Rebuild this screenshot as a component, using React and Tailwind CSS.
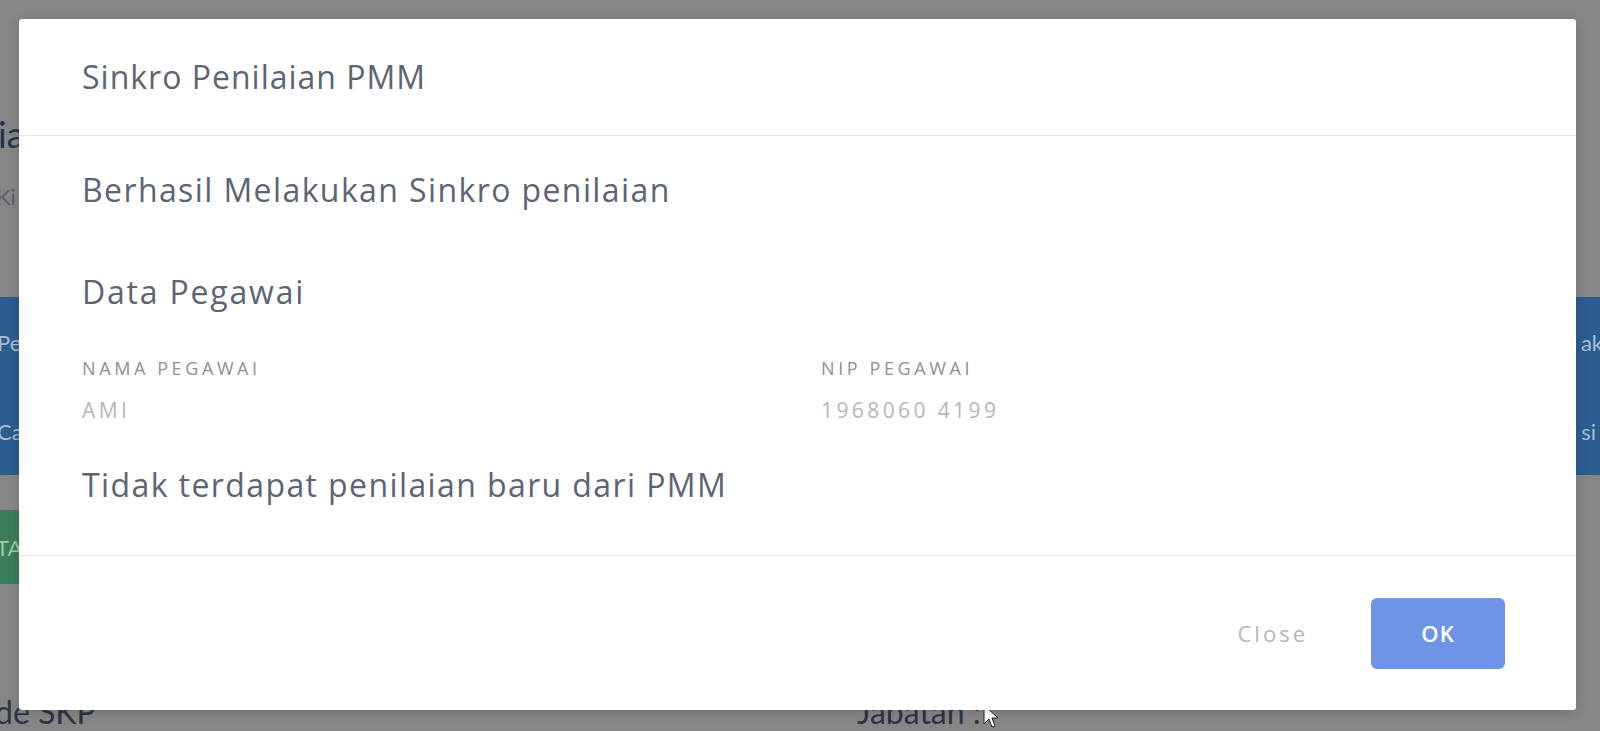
export default function App() {
  return (
    <div className="relative h-[731px] w-[1600px] overflow-hidden bg-[#868686]" style={{ fontFamily: 'Lato, "Open Sans", sans-serif' }}>
      {/* page under the overlay */}
      <div className="flex flex-col">
        <div className="h-[114px]" />
        <p className="-ml-[2px] text-[36px] leading-[40px] text-[#23344d]">ia</p>
        <p className="mt-[30px] -ml-[4px] text-[22px] leading-[26px] text-[#5b5f66]">Ki</p>
        <div className="mt-[87px] flex h-[178px] justify-between bg-[#2b5d91] text-[22px] text-[#a9bdd2]">
          <div className="flex flex-col gap-[56px] pt-[29px]">
            <span className="-ml-[3px]">Pe</span>
            <span className="-ml-[3px]">Ca</span>
          </div>
          <div className="flex flex-col items-end gap-[56px] pt-[29px]">
            <span className="-mr-[3px]">ak</span>
            <span className="mr-[4px]">si</span>
          </div>
        </div>
        <div className="mt-[35px] flex h-[74px] w-[120px] items-center bg-[#3a7e57] text-[22px] text-[#9fc3ab]">
          <span className="-ml-[4px]">TA</span>
        </div>
        <div className="mt-[110px] flex text-[32px] leading-[36px] text-[#2d3546]">
          <span className="-ml-[5px] w-[862px]">de SKP</span>
          <span>Jabatan :</span>
          <svg className="ml-[2px] mt-[10px]" width="16" height="24" viewBox="0 0 16 24">
            <path d="M1 1 L1 20 L6 15 L9 23 L12 22 L9 14 L15 14 Z" fill="#fff" stroke="#222" strokeWidth="1" />
          </svg>
        </div>
      </div>

      {/* modal */}
      <div
        className="absolute left-[19px] top-[19px] flex h-[691px] w-[1557px] flex-col rounded-[3px] bg-white shadow-[0_2px_12px_rgba(0,0,0,0.15)]"
        style={{ fontFamily: '"Open Sans", Lato, sans-serif' }}
      >
        <div className="flex h-[116px] items-center px-[63px]">
          <h2 className="text-[32px] leading-[36px] tracking-[1px] text-[#5d6473]">Sinkro Penilaian PMM</h2>
        </div>
        <div className="h-px bg-[#e4e6ea]" />
        <div className="flex flex-col px-[63px] pt-[36px] pb-[52px]">
          <p className="text-[32px] leading-[36px] tracking-[1.4px] text-[#5d6473]">Berhasil Melakukan Sinkro penilaian</p>
          <p className="mt-[66px] text-[32px] leading-[36px] tracking-[1.8px] text-[#5d6473]">Data Pegawai</p>
          <div className="mt-[48px] grid grid-cols-[739px_1fr]">
            <div className="flex flex-col gap-[20px]">
              <span className="text-[18px] leading-[20px] tracking-[3.6px] text-[#8b9099]">NAMA PEGAWAI</span>
              <span className="text-[21px] leading-[25px] tracking-[3.4px] text-[#b4b7bd]">AMI</span>
            </div>
            <div className="flex flex-col gap-[20px]">
              <span className="text-[18px] leading-[20px] tracking-[3.6px] text-[#8b9099]">NIP PEGAWAI</span>
              <span className="text-[21px] leading-[25px] tracking-[3.4px] text-[#b4b7bd]">1968060 4199</span>
            </div>
          </div>
          <p className="mt-[44px] text-[32px] leading-[36px] tracking-[1.4px] text-[#5d6473]">Tidak terdapat penilaian baru dari PMM</p>
        </div>
        <div className="h-px bg-[#e4e6ea]" />
        <div className="flex flex-1 items-center justify-end gap-[63px] pr-[71px]">
          <button className="text-[22px] tracking-[3px] text-[#b3b6bd]">Close</button>
          <button className="flex h-[71px] w-[134px] items-center justify-center rounded-[6px] bg-[#6e94e6] text-[22px] font-semibold tracking-[1px] text-white">OK</button>
        </div>
      </div>
    </div>
  );
}
